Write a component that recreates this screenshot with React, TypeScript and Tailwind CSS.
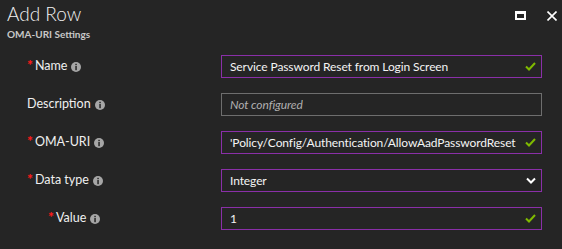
import React from 'react';

const Info: React.FC = () => (
  <svg width="10" height="10" viewBox="0 0 10 10" className="ml-[4px] shrink-0">
    <circle cx="5" cy="5" r="5" fill="#a6a6a6" />
    <rect x="4.3" y="1.8" width="1.5" height="1.4" fill="#252525" />
    <rect x="4.3" y="4" width="1.5" height="4.2" fill="#252525" />
  </svg>
);

const Check: React.FC = () => (
  <svg width="11" height="9" viewBox="0 0 11 9" className="shrink-0 ml-[3px]">
    <path d="M1 4.5 L4 7.5 L10 1" fill="none" stroke="#7fba00" strokeWidth="2" />
  </svg>
);

const Chevron: React.FC = () => (
  <svg width="10" height="7" viewBox="0 0 10 7" className="shrink-0 ml-1">
    <path d="M1 1.5 L5 5.5 L9 1.5" fill="none" stroke="#ffffff" strokeWidth="2" />
  </svg>
);

type Row = {
  label: string;
  required?: boolean;
  indent?: boolean;
  value: string;
  placeholder?: boolean;
  kind: 'check' | 'select' | 'none';
};

const rows: Row[] = [
  { label: 'Name', required: true, value: 'Service Password Reset from Login Screen', kind: 'check' },
  { label: 'Description', value: 'Not configured', placeholder: true, kind: 'none' },
  { label: 'OMA-URI', required: true, value: "'Policy/Config/Authentication/AllowAadPasswordReset", kind: 'check' },
  { label: 'Data type', required: true, value: 'Integer', kind: 'select' },
  { label: 'Value', required: true, indent: true, value: '1', kind: 'check' },
];

export default function App() {
  return (
    <div
      className="w-[562px] h-[249px] bg-[#252525] text-white overflow-hidden"
      style={{ fontFamily: 'Lato, "Open Sans", sans-serif' }}
    >
      {/* header */}
      <div className="flex justify-between pl-[7px] pr-[5px]">
        <div>
          <div className="text-[19px] leading-[22px] pt-[3px] font-light text-[#f2f2f2]">Add Row</div>
          <div className="text-[10px] leading-[14px] font-bold text-[#c8c8c8] mt-[2px]">OMA-URI Settings</div>
        </div>
        <div className="flex items-start gap-[21px] pt-[11px]">
          <div className="w-[11px] h-[9px] border-2 border-t-[3px] border-white" />
          <svg width="10" height="10" viewBox="0 0 10 10">
            <path d="M0.5 0.5 L9.5 9.5 M9.5 0.5 L0.5 9.5" stroke="#ffffff" strokeWidth="1.6" />
          </svg>
        </div>
      </div>

      {/* form */}
      <div className="flex flex-col gap-[15px] mt-[14px] pl-[27px] pr-[20px]">
        {rows.map((r) => (
          <div key={r.label} className="flex items-center h-[23px]">
            <div className={`flex items-center w-[194px] shrink-0 text-[12.5px] ${r.indent ? 'pl-[21px]' : ''}`}>
              {r.required && (
                <span className="text-[#ff1a1a] font-black mr-[2px] text-[14px] leading-[14px] -mt-[3px]">*</span>
              )}
              <span className="text-[#f0f0f0]">{r.label}</span>
              <Info />
            </div>
            <div
              className={`flex-1 min-w-0 h-[23px] flex items-center justify-between pl-[8px] pr-[5px] border ${
                r.placeholder ? 'border-[#6e6e6e]' : 'border-[#8a2fa8]'
              }`}
            >
              <span
                className={`text-[12px] tracking-[-0.1px] whitespace-nowrap overflow-hidden min-w-0 ${
                  r.placeholder ? 'italic text-[#b0b0b0]' : 'text-[#f4f4f4]'
                }`}
              >
                {r.value}
              </span>
              {r.kind === 'check' && <Check />}
              {r.kind === 'select' && <Chevron />}
            </div>
          </div>
        ))}
      </div>
    </div>
  );
}
